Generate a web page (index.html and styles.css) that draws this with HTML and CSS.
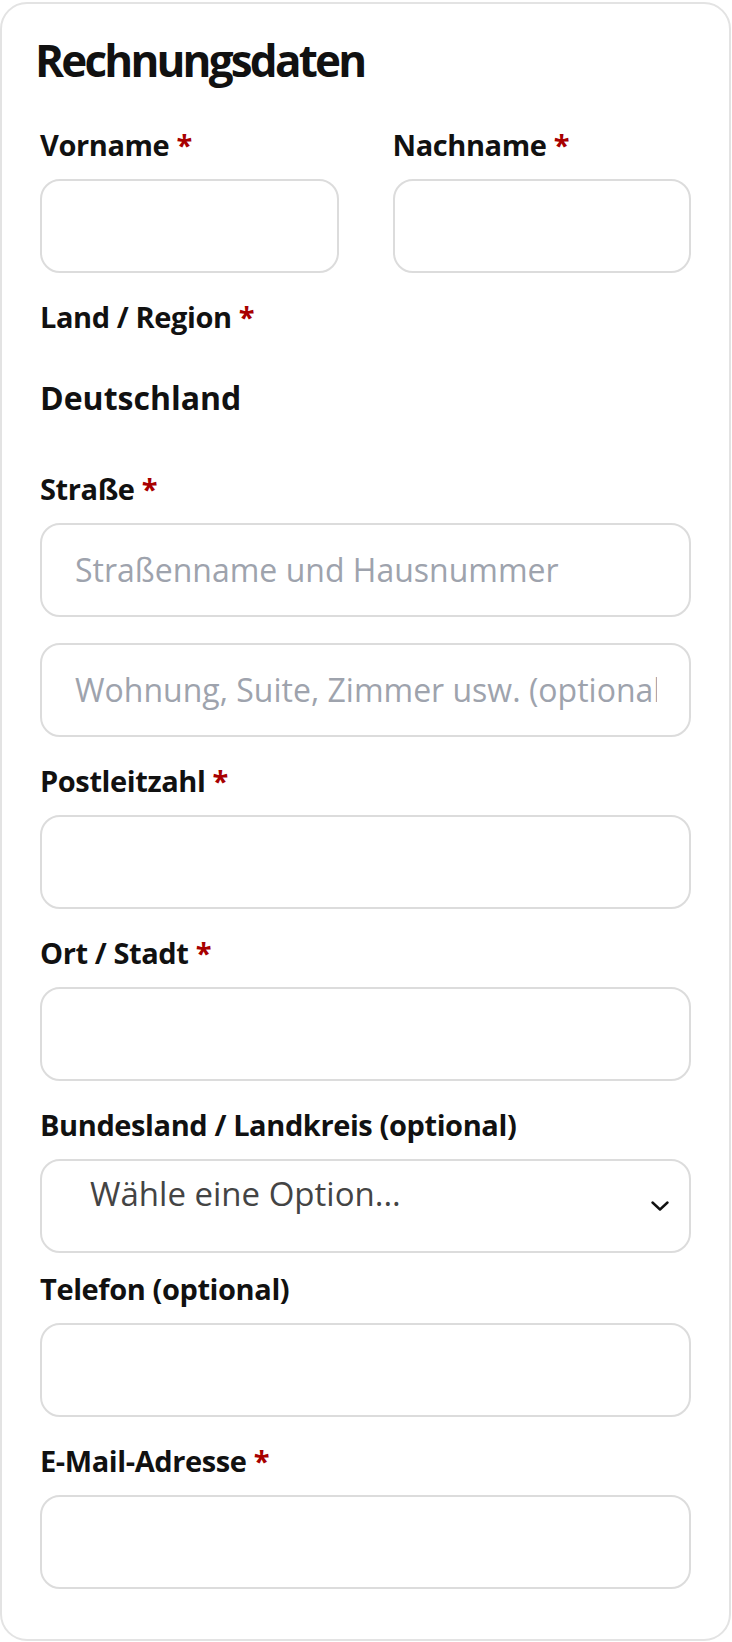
FILE: index.html
```html
<!DOCTYPE html>
<html lang="de">
<head>
<meta charset="utf-8">
<title>Rechnungsdaten</title>
<link rel="stylesheet" href="styles.css">
</head>
<body>
<div class="card">
  <h3 class="title">Rechnungsdaten</h3>
  <div class="fields">
    <div class="row-2">
      <div class="field">
        <label class="label" for="fn">Vorname <span class="req">*</span></label>
        <input class="input" id="fn" type="text">
      </div>
      <div class="field">
        <label class="label" for="ln">Nachname <span class="req">*</span></label>
        <input class="input" id="ln" type="text">
      </div>
    </div>
    <div class="field field-country">
      <label class="label">Land / Region <span class="req">*</span></label>
      <div class="country">Deutschland</div>
    </div>
    <div class="field">
      <label class="label" for="st">Straße <span class="req">*</span></label>
      <input class="input" id="st" type="text" placeholder="Straßenname und Hausnummer">
      <input class="input input-second" type="text" placeholder="Wohnung, Suite, Zimmer usw. (optional)">
    </div>
    <div class="field">
      <label class="label" for="plz">Postleitzahl <span class="req">*</span></label>
      <input class="input" id="plz" type="text">
    </div>
    <div class="field">
      <label class="label" for="city">Ort / Stadt <span class="req">*</span></label>
      <input class="input" id="city" type="text">
    </div>
    <div class="field field-select">
      <label class="label">Bundesland / Landkreis (optional)</label>
      <div class="select">
        <span class="select-text">Wähle eine Option...</span>
        <svg class="chevron" width="18" height="10" viewBox="0 0 18 10" aria-hidden="true"><polyline points="1.5,1.5 9,8.5 16.5,1.5" fill="none" stroke="#111" stroke-width="2.4" stroke-linecap="round" stroke-linejoin="round"/></svg>
      </div>
    </div>
    <div class="field">
      <label class="label" for="tel">Telefon (optional)</label>
      <input class="input" id="tel" type="tel">
    </div>
    <div class="field field-last">
      <label class="label" for="mail">E-Mail-Adresse <span class="req">*</span></label>
      <input class="input" id="mail" type="email">
    </div>
  </div>
</div>
</body>
</html>
```

FILE: styles.css
```css
* {
  box-sizing: border-box;
}

html,
body {
  margin: 0;
  padding: 0;
  background: #ffffff;
}

body {
  font-family: "Open Sans", "Noto Sans", sans-serif;
  color: #111111;
}

.card {
  width: 731px;
  margin-top: 2px;
  border: 2px solid #e3e3e3;
  border-radius: 27px;
  padding: 28px 38px 50px 33px;
}

.title {
  margin: 0 0 36.5px;
  font-size: 44px;
  line-height: 56px;
  font-weight: 700;
  letter-spacing: -2.8px;
  color: #111111;
}

.fields {
  padding-left: 5px;
}

.row-2 {
  display: grid;
  grid-template-columns: 1fr 1fr;
  column-gap: 54px;
}

.field {
  display: flex;
  flex-direction: column;
  margin-bottom: 24px;
}

.field-last {
  margin-bottom: 0;
}

.field-select {
  margin-bottom: 16px;
}

.label {
  display: block;
  margin-bottom: 14px;
  font-size: 29px;
  line-height: 40px;
  font-weight: 700;
  letter-spacing: -0.4px;
  color: #111111;
}

.req {
  color: #a80000;
}

.field-country {
  margin-bottom: 49px;
}

.field-country .label {
  margin-bottom: 39px;
}

.country {
  font-size: 32px;
  line-height: 44px;
  font-weight: 700;
  color: #111111;
}

.input {
  display: block;
  width: 100%;
  height: 94px;
  margin: 0;
  padding: 0 32px 0 33px;
  border: 2px solid #dcdcdc;
  border-radius: 20px;
  background: #ffffff;
  font-family: "Open Sans", "Noto Sans", sans-serif;
  font-size: 32px;
  color: #111111;
  outline: none;
}

.input::placeholder {
  color: #9ea3ad;
  opacity: 1;
}

.input-second {
  margin-top: 26px;
}

.select {
  display: flex;
  align-items: flex-start;
  justify-content: space-between;
  height: 94px;
  padding: 11px 20px 0 48px;
  border: 2px solid #dcdcdc;
  border-radius: 20px;
  background: #ffffff;
}

.select-text {
  font-size: 33px;
  line-height: 44px;
  color: #444444;
}

.chevron {
  align-self: center;
  margin-top: -11px;
  flex: none;
}
```
